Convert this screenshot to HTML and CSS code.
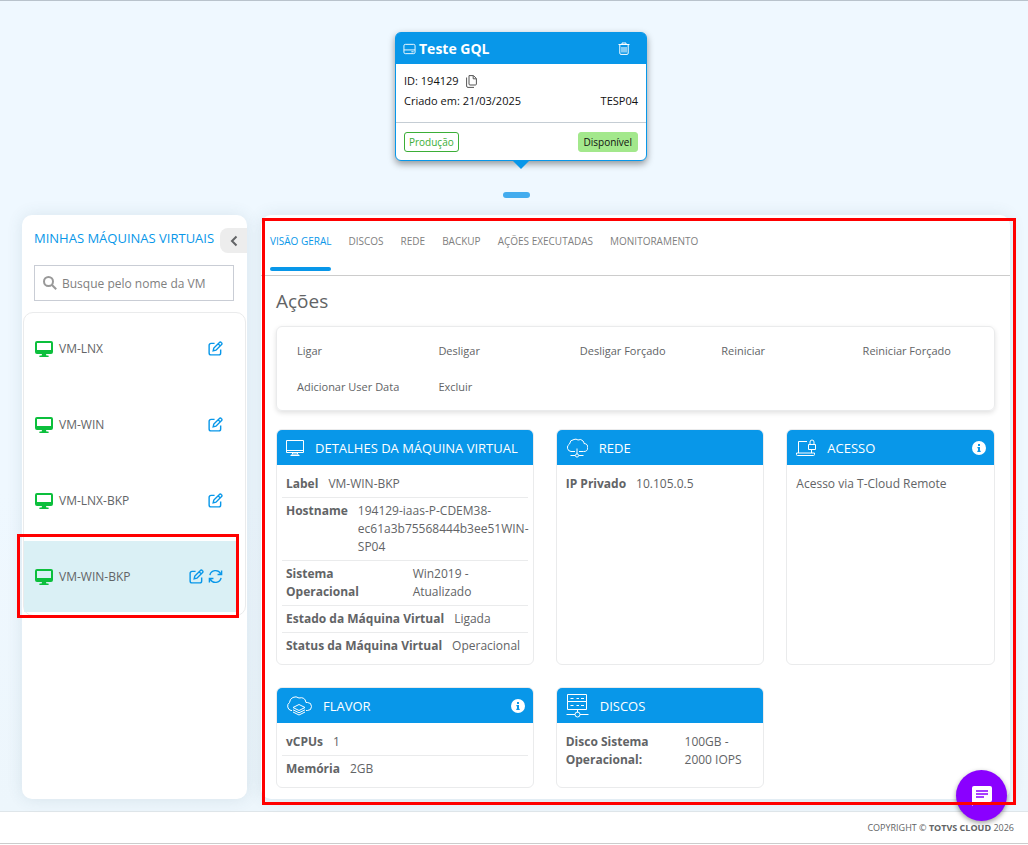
FILE: index.html
```html
<!DOCTYPE html>
<html lang="pt-BR">
<head>
    <meta charset="UTF-8">
    <meta name="viewport" content="width=device-width, initial-scale=1.0">
    <title>Minhas Máquinas Virtuais - TOTVS Cloud</title>
    <link rel="stylesheet" href="styles.css">
</head>
<body>
    <!-- Shared icons -->
    <svg class="sprite" aria-hidden="true">
        <symbol id="icon-monitor" viewBox="0 0 18 16">
            <path fill-rule="evenodd" d="M2 0h14a2 2 0 0 1 2 2v9a2 2 0 0 1-2 2h-5l.4 1.400H13a.8.8 0 0 1 0 1.600H5a.8.8 0 0 1 0-1.600h1.600L7 13H2a2 2 0 0 1-2-2V2a2 2 0 0 1 2-2zm0 2v7h14V2z"></path>
        </symbol>
        <symbol id="icon-edit" viewBox="0 0 16 16">
            <path d="M7 2.500H3.200A2 2 0 0 0 1.200 4.500v8.300a2 2 0 0 0 2 2h8.300a2 2 0 0 0 2-2V9"></path>
            <path d="M5.500 10.500l.7-3 6-6a1.300 1.300 0 0 1 1.900 0l.4.4a1.300 1.300 0 0 1 0 1.900l-6 6zM10.800 3l2.200 2.200"></path>
        </symbol>
        <symbol id="icon-sync" viewBox="0 0 16 16">
            <path d="M2 6.500A6.200 6.200 0 0 1 13.500 5M14.500 1.500v4.300h-4.300M14 9.500A6.200 6.200 0 0 1 2.500 11M1.500 14.500v-4.300h4.300"></path>
        </symbol>
        <symbol id="icon-info" viewBox="0 0 14 14">
            <circle cx="7" cy="7" r="7" fill="#fff"></circle>
            <path fill="#0897e9" d="M6 3h2v2H6zM5.400 6H8v3.800h.7V11H5.300V9.800H6V7.200h-.6z"></path>
        </symbol>
    </svg>

    <main class="page">
        <section class="server-card">
            <header class="server-header">
                <svg class="server-icon" viewBox="0 0 14 12">
                    <rect x="1" y="1" width="12" height="10" rx="1.500"></rect>
                    <path d="M1 7h12M9 9h2.500"></path>
                </svg>
                <h1 class="server-title">Teste GQL</h1>
                <button class="trash-button" aria-label="Excluir">
                    <svg viewBox="0 0 12 13">
                        <path d="M.5 2.500h11M4 2.500V1h4v1.500M1.800 3v8.200q0 1.200 1.200 1.200h6q1.200 0 1.200-1.200V3M4 5v5.500M6 5v5.500M8 5v5.500"></path>
                    </svg>
                </button>
            </header>
            <div class="server-body">
                <p class="server-line">
                    <span>ID: 194129</span>
                    <button class="copy-button" aria-label="Copiar ID">
                        <svg viewBox="0 0 11 13">
                            <path d="M3 .6h4.500L10.400 3.500V9a1 1 0 0 1-1 1H4a1 1 0 0 1-1-1zM7.200.8v3h3M.6 2.500V11a1.400 1.400 0 0 0 1.400 1.400h6"></path>
                        </svg>
                    </button>
                </p>
                <p class="server-line spread"><span>Criado em: 21/03/2025</span><span>TESP04</span></p>
            </div>
            <footer class="server-footer">
                <span class="tag tag-outline">Produção</span>
                <span class="tag tag-filled">Disponível</span>
            </footer>
        </section>
        <div class="slider-dot"></div>

        <div class="workspace">
            <aside class="sidebar">
                <div class="sidebar-header">
                    <h2 class="sidebar-title">MINHAS MÁQUINAS VIRTUAIS</h2>
                    <button class="collapse-button" aria-label="Recolher">
                        <svg viewBox="0 0 8 12"><path d="M6.500 1.500L2 6l4.500 4.500"></path></svg>
                    </button>
                </div>
                <label class="search">
                    <svg viewBox="0 0 14 14"><circle cx="5.500" cy="5.500" r="4.500"></circle><path d="M9 9l4.200 4.200"></path></svg>
                    <input class="search-input" type="text" placeholder="Busque pelo nome da VM" aria-label="Busque pelo nome da VM">
                </label>
                <ul class="vm-list">
                    <li class="vm-item">
                        <svg class="vm-icon"><use href="#icon-monitor"></use></svg>
                        <span class="vm-name">VM-LNX</span>
                        <button class="icon-button" aria-label="Editar"><svg><use href="#icon-edit"></use></svg></button>
                    </li>
                    <li class="vm-item">
                        <svg class="vm-icon"><use href="#icon-monitor"></use></svg>
                        <span class="vm-name">VM-WIN</span>
                        <button class="icon-button" aria-label="Editar"><svg><use href="#icon-edit"></use></svg></button>
                    </li>
                    <li class="vm-item">
                        <svg class="vm-icon"><use href="#icon-monitor"></use></svg>
                        <span class="vm-name">VM-LNX-BKP</span>
                        <button class="icon-button" aria-label="Editar"><svg><use href="#icon-edit"></use></svg></button>
                    </li>
                    <li class="vm-item selected">
                        <svg class="vm-icon"><use href="#icon-monitor"></use></svg>
                        <span class="vm-name">VM-WIN-BKP</span>
                        <button class="icon-button" aria-label="Editar"><svg><use href="#icon-edit"></use></svg></button>
                        <button class="icon-button" aria-label="Atualizar"><svg><use href="#icon-sync"></use></svg></button>
                        <div class="highlight highlight-item"></div>
                    </li>
                </ul>
            </aside>

            <section class="panel">
                <nav class="tabs">
                    <a class="tab active" href="#">VISÃO GERAL</a>
                    <a class="tab" href="#">DISCOS</a>
                    <a class="tab" href="#">REDE</a>
                    <a class="tab" href="#">BACKUP</a>
                    <a class="tab" href="#">AÇÕES EXECUTADAS</a>
                    <a class="tab" href="#">MONITORAMENTO</a>
                </nav>
                <div class="panel-content">
                    <h2 class="section-title">Ações</h2>
                    <div class="actions">
                        <button class="action">Ligar</button>
                        <button class="action">Desligar</button>
                        <button class="action">Desligar Forçado</button>
                        <button class="action">Reiniciar</button>
                        <button class="action">Reiniciar Forçado</button>
                        <button class="action">Adicionar User Data</button>
                        <button class="action">Excluir</button>
                    </div>

                    <div class="cards">
                        <article class="card">
                            <header class="card-header">
                                <svg class="icon-small" viewBox="0 0 18 16">
                                    <path d="M.5.5h17v12H.5zM.5 10.500h17M7 12.500l-1.500 3M11 12.500l1.500 3M4.500 15.500h9M6.500 14h5"></path>
                                </svg>
                                <h3 class="card-title">DETALHES DA MÁQUINA VIRTUAL</h3>
                            </header>
                            <dl class="details">
                                <div class="detail"><dt>Label</dt><dd>VM-WIN-BKP</dd></div>
                                <div class="detail"><dt>Hostname</dt><dd>194129-iaas-P-CDEM38-ec61a3b75568444b3ee51WIN-SP04</dd></div>
                                <div class="detail"><dt>Sistema Operacional</dt><dd>Win2019 - Atualizado</dd></div>
                                <div class="detail"><dt>Estado da Máquina Virtual</dt><dd>Ligada</dd></div>
                                <div class="detail"><dt>Status da Máquina Virtual</dt><dd>Operacional</dd></div>
                            </dl>
                        </article>

                        <article class="card">
                            <header class="card-header">
                                <svg class="icon-network" viewBox="0 0 22 20">
                                    <path d="M9 13.500H5A4 4 0 0 1 3.500 6 5 5 0 0 1 8 1.500q2-1 4 .5 3-1.500 5 1 1 1 1 2.500a4 4 0 0 1-.5 8H13M11 10.500v5.500M6 13.500h3M13 13.500h3M4.500 17.500H9M13 17.500h4.500"></path>
                                    <circle cx="11" cy="17.500" r="1.600"></circle>
                                </svg>
                                <h3 class="card-title">REDE</h3>
                            </header>
                            <dl class="details">
                                <div class="detail"><dt>IP Privado</dt><dd>10.105.0.5</dd></div>
                            </dl>
                        </article>

                        <article class="card">
                            <header class="card-header">
                                <svg class="icon-access" viewBox="0 0 20 18">
                                    <path d="M11 2.500H2.500V14M15.500 10v4M.5 14h18v1.500q0 1-1 1h-16q-1 0-1-1zM12.500 5.500h7v5h-7zM14 5.500V3a2 2 0 0 1 4 0v2.500"></path>
                                </svg>
                                <h3 class="card-title">ACESSO</h3>
                                <button class="info-button" aria-label="Informações"><svg><use href="#icon-info"></use></svg></button>
                            </header>
                            <div class="details">
                                <p class="detail">Acesso via T-Cloud Remote</p>
                            </div>
                        </article>

                        <article class="card">
                            <header class="card-header">
                                <svg class="icon-flavor" viewBox="0 0 26 20">
                                    <path d="M6 14.500H5A4.500 4.500 0 0 1 3.500 6.500 6 6 0 0 1 13 2q6-1.500 7 4.500h1.500a4 4 0 0 1 0 8H20"></path>
                                    <path d="M7 11.500l6-3 6 3-6 3zM7 13.800l6 3 6-3M7 16l6 3 6-3"></path>
                                </svg>
                                <h3 class="card-title">FLAVOR</h3>
                                <button class="info-button" aria-label="Informações"><svg><use href="#icon-info"></use></svg></button>
                            </header>
                            <dl class="details">
                                <div class="detail"><dt>vCPUs</dt><dd>1</dd></div>
                                <div class="detail"><dt>Memória</dt><dd>2GB</dd></div>
                            </dl>
                        </article>

                        <article class="card">
                            <header class="card-header">
                                <svg class="icon-disks" viewBox="0 0 23 24">
                                    <path d="M1.500.5h19v7h-19zM1.500 7.500h19v8h-19zM4.500 4.500h3M10.500 4.500h2.500M15 4.500h3M4.500 11.500h3M10.500 11.500h2.500M15 11.500h3M11.500 15.500v3M.5 20.500h8.500M14 20.500h8.500"></path>
                                    <circle cx="11.500" cy="20.500" r="2.500"></circle>
                                </svg>
                                <h3 class="card-title">DISCOS</h3>
                            </header>
                            <dl class="details">
                                <div class="detail"><dt>Disco Sistema Operacional:</dt><dd>100GB - 2000 IOPS</dd></div>
                            </dl>
                        </article>
                    </div>
                </div>
                <div class="highlight highlight-panel"></div>
            </section>
        </div>
    </main>

    <footer class="page-footer">
        <p>COPYRIGHT © <strong>TOTVS CLOUD</strong> 2026</p>
    </footer>

    <button class="chat-button" aria-label="Chat">
        <svg viewBox="0 0 20 20">
            <path fill="#fff" d="M2 0h16a2 2 0 0 1 2 2v12a2 2 0 0 1-2 2H4l-4 4V2a2 2 0 0 1 2-2z"></path>
            <path d="M4 5h12M4 8h12M4 11h8" stroke="#8a00ff" stroke-width="1.500"></path>
        </svg>
    </button>
</body>
</html>
```
FILE: styles.css
```css
:root {
    --blue: #0897e9;
    --text: #626466;
    --muted: #808080;
    --line: #eaebec;
    --page-bg: #eff8ff;
    --red: #ff0000;
}

* {
    margin: 0;
    padding: 0;
    box-sizing: border-box;
    font-family: "Open Sans", "Noto Sans", sans-serif;
}

body {
    min-height: 100vh;
    display: flex;
    flex-direction: column;
    background: #ffffff;
    color: var(--text);
    font-size: 12px;
}

button {
    background: none;
    border: none;
    color: inherit;
    cursor: pointer;
}

svg {
    display: block;
    flex: none;
    fill: none;
    stroke: currentColor;
}

.sprite {
    position: absolute;
    width: 0;
    height: 0;
}

.page {
    display: flex;
    flex-direction: column;
    align-items: center;
    background: linear-gradient(var(--page-bg) 60%, #edf6fc);
    border-top: 1px solid #b9c3cc;
    padding: 31px 18px 12px 22px;
}

/* Server card */
.server-card {
    position: relative;
    width: 252px;
    margin-left: 10px;
    background: #ffffff;
    border: 1px solid var(--blue);
    border-radius: 6px;
    box-shadow: 0 3px 7px rgba(0, 0, 0, 0.4);
    color: #111111;
    font-size: 11px;
}

.server-card::after {
    content: "";
    position: absolute;
    top: 100%;
    left: 50%;
    margin-left: -9px;
    border: 9px solid transparent;
    border-top-color: var(--blue);
    border-bottom: none;
}

.server-header {
    display: flex;
    align-items: center;
    gap: 3px;
    height: 31px;
    padding: 0 16px 0 7px;
    background: var(--blue);
    border-radius: 4px 4px 0 0;
    color: #ffffff;
}

.server-icon {
    width: 13px;
    height: 12px;
}

.server-title {
    font-size: 14px;
    font-weight: 700;
}

.trash-button {
    margin-left: auto;
}

.trash-button svg {
    width: 12px;
    height: 13px;
}

.server-body {
    padding: 7px 8px 11px;
    border-bottom: 1px solid #c5cdd4;
}

.server-line {
    display: flex;
    align-items: center;
    gap: 7px;
    line-height: 20px;
}

.spread {
    justify-content: space-between;
}

.copy-button {
    color: #555555;
}

.copy-button svg {
    width: 11px;
    height: 13px;
}

.server-footer {
    display: flex;
    justify-content: space-between;
    padding: 9px 8px 8px;
}

.tag {
    height: 20px;
    padding: 0 4px;
    border: 1px solid #a3e88c;
    border-radius: 3px;
    font-size: 10px;
    line-height: 18px;
}

.tag-outline {
    border-color: #3bae37;
    color: #3bae37;
}

.tag-filled {
    padding: 0 5px;
    background: #a3e88c;
}

.slider-dot {
    width: 27px;
    height: 6px;
    margin: 31px 0 17px;
    border-radius: 3px;
    background: #43acee;
}

/* Workspace */
.workspace {
    display: grid;
    grid-template-columns: 225px 1fr;
    gap: 14px;
    width: 100%;
}

.sidebar,
.panel {
    position: relative;
    background: #ffffff;
    border-radius: 10px;
    box-shadow: 0 0 16px rgba(60, 90, 110, 0.12);
}

.sidebar-header {
    display: flex;
    justify-content: space-between;
    padding: 13px 0 0 12px;
}

.sidebar-title {
    color: var(--blue);
    font-size: 13px;
    font-weight: 400;
    line-height: 21px;
    white-space: nowrap;
}

.collapse-button {
    display: flex;
    align-items: center;
    justify-content: center;
    width: 27px;
    height: 25px;
    background: #ededed;
    border-radius: 8px 0 0 8px;
}

.collapse-button svg {
    width: 8px;
    height: 12px;
    stroke-width: 2;
}

.search {
    display: flex;
    align-items: center;
    gap: 5px;
    height: 36px;
    margin: 12px 13px 11px 12px;
    padding: 0 8px;
    border: 1px solid #c9cdd5;
    color: #999999;
}

.search svg {
    width: 14px;
    height: 14px;
    stroke-width: 2;
}

.search-input {
    flex: 1;
    min-width: 0;
    border: none;
    outline: none;
    font-size: 12px;
}

.search-input::placeholder {
    color: var(--muted);
}

.vm-list {
    display: flex;
    flex-direction: column;
    gap: 5px;
    margin: 0 1px;
    padding-bottom: 3px;
    border: 1px solid var(--line);
    border-radius: 10px;
    list-style: none;
}

.vm-item {
    position: relative;
    display: flex;
    align-items: center;
    gap: 4px;
    height: 71px;
    margin-right: 8px;
    padding: 0 14px 0 11px;
}

.selected {
    background: #daf0f5;
}

.vm-icon {
    width: 18px;
    height: 16px;
    fill: #0cbf3c;
    stroke: none;
}

.vm-name {
    flex: 1;
    padding-left: 2px;
}

.icon-button {
    color: var(--blue);
}

.icon-button svg {
    width: 15px;
    height: 15px;
    stroke-width: 1.5;
}

/* Red markers around the areas being explained */
.highlight {
    position: absolute;
    z-index: 5;
    border: 3px solid var(--red);
    pointer-events: none;
}

.highlight-item {
    inset: -7px -2px -6px -7px;
}

.highlight-panel {
    inset: 3px -6px -6px 1px;
}

/* Panel */
.tabs {
    display: flex;
    gap: 17px;
    padding: 0 9px 4px;
    border-bottom: 1px solid #cccccc;
}

.tab {
    padding: 18px 0 22px;
    color: var(--muted);
    font-size: 10px;
    line-height: 16px;
    text-decoration: none;
}

.active {
    position: relative;
    color: var(--blue);
}

.active::after {
    content: "";
    position: absolute;
    left: 0;
    right: 0;
    bottom: 0;
    height: 4px;
    border-radius: 2px;
    background: var(--blue);
}

.panel-content {
    padding: 13px 15px 11px;
}

.section-title {
    margin-bottom: 13px;
    font-size: 19px;
    font-weight: 400;
    line-height: 24px;
}

.actions {
    display: grid;
    grid-template-columns: repeat(5, 1fr);
    margin-bottom: 18px;
    padding: 5px 5px 6px;
    border: 1px solid var(--line);
    border-radius: 6px;
    box-shadow: 0 2px 5px rgba(0, 0, 0, 0.12);
}

.action {
    height: 36px;
    padding-left: 15px;
    font-size: 11px;
    text-align: left;
}

.cards {
    display: grid;
    grid-template-columns: 21fr 17fr 17fr;
    gap: 22px;
}

.card {
    min-width: 0;
    border: 1px solid var(--line);
    border-radius: 6px;
    overflow: hidden;
}

.card-header {
    display: flex;
    align-items: center;
    gap: 11px;
    height: 35px;
    padding: 0 8px 0 9px;
    background: var(--blue);
    color: #ffffff;
}

.card-title {
    font-size: 13px;
    font-weight: 400;
    white-space: nowrap;
}

.icon-small {
    width: 18px;
    height: 16px;
}

.icon-network {
    width: 22px;
    height: 20px;
}

.icon-access {
    width: 20px;
    height: 18px;
}

.icon-flavor {
    width: 26px;
    height: 20px;
}

.icon-disks {
    width: 23px;
    height: 24px;
}

.info-button {
    margin-left: auto;
}

.info-button svg {
    width: 14px;
    height: 14px;
    stroke: none;
}

.details {
    padding: 6px 5px 4px;
}

.detail {
    display: flex;
    gap: 10px;
    padding: 4px;
    border-bottom: 1px solid var(--line);
    line-height: 18px;
}

.detail:last-child {
    border-color: transparent;
}

.detail dt {
    font-weight: 700;
}

/* Footer */
.page-footer {
    padding: 8px 14px;
    border-top: 1px solid #dfe6ea;
    border-bottom: 1px solid #cccccc;
    font-size: 9px;
    line-height: 15px;
    text-align: right;
}

.chat-button {
    position: fixed;
    right: 21px;
    bottom: 24px;
    z-index: 2;
    display: flex;
    align-items: center;
    justify-content: center;
    width: 51px;
    height: 51px;
    border-radius: 50%;
    background: #8a00ff;
    box-shadow: 0 2px 5px rgba(0, 0, 0, 0.4);
}

.chat-button svg {
    width: 20px;
    height: 20px;
    stroke: none;
}
```
